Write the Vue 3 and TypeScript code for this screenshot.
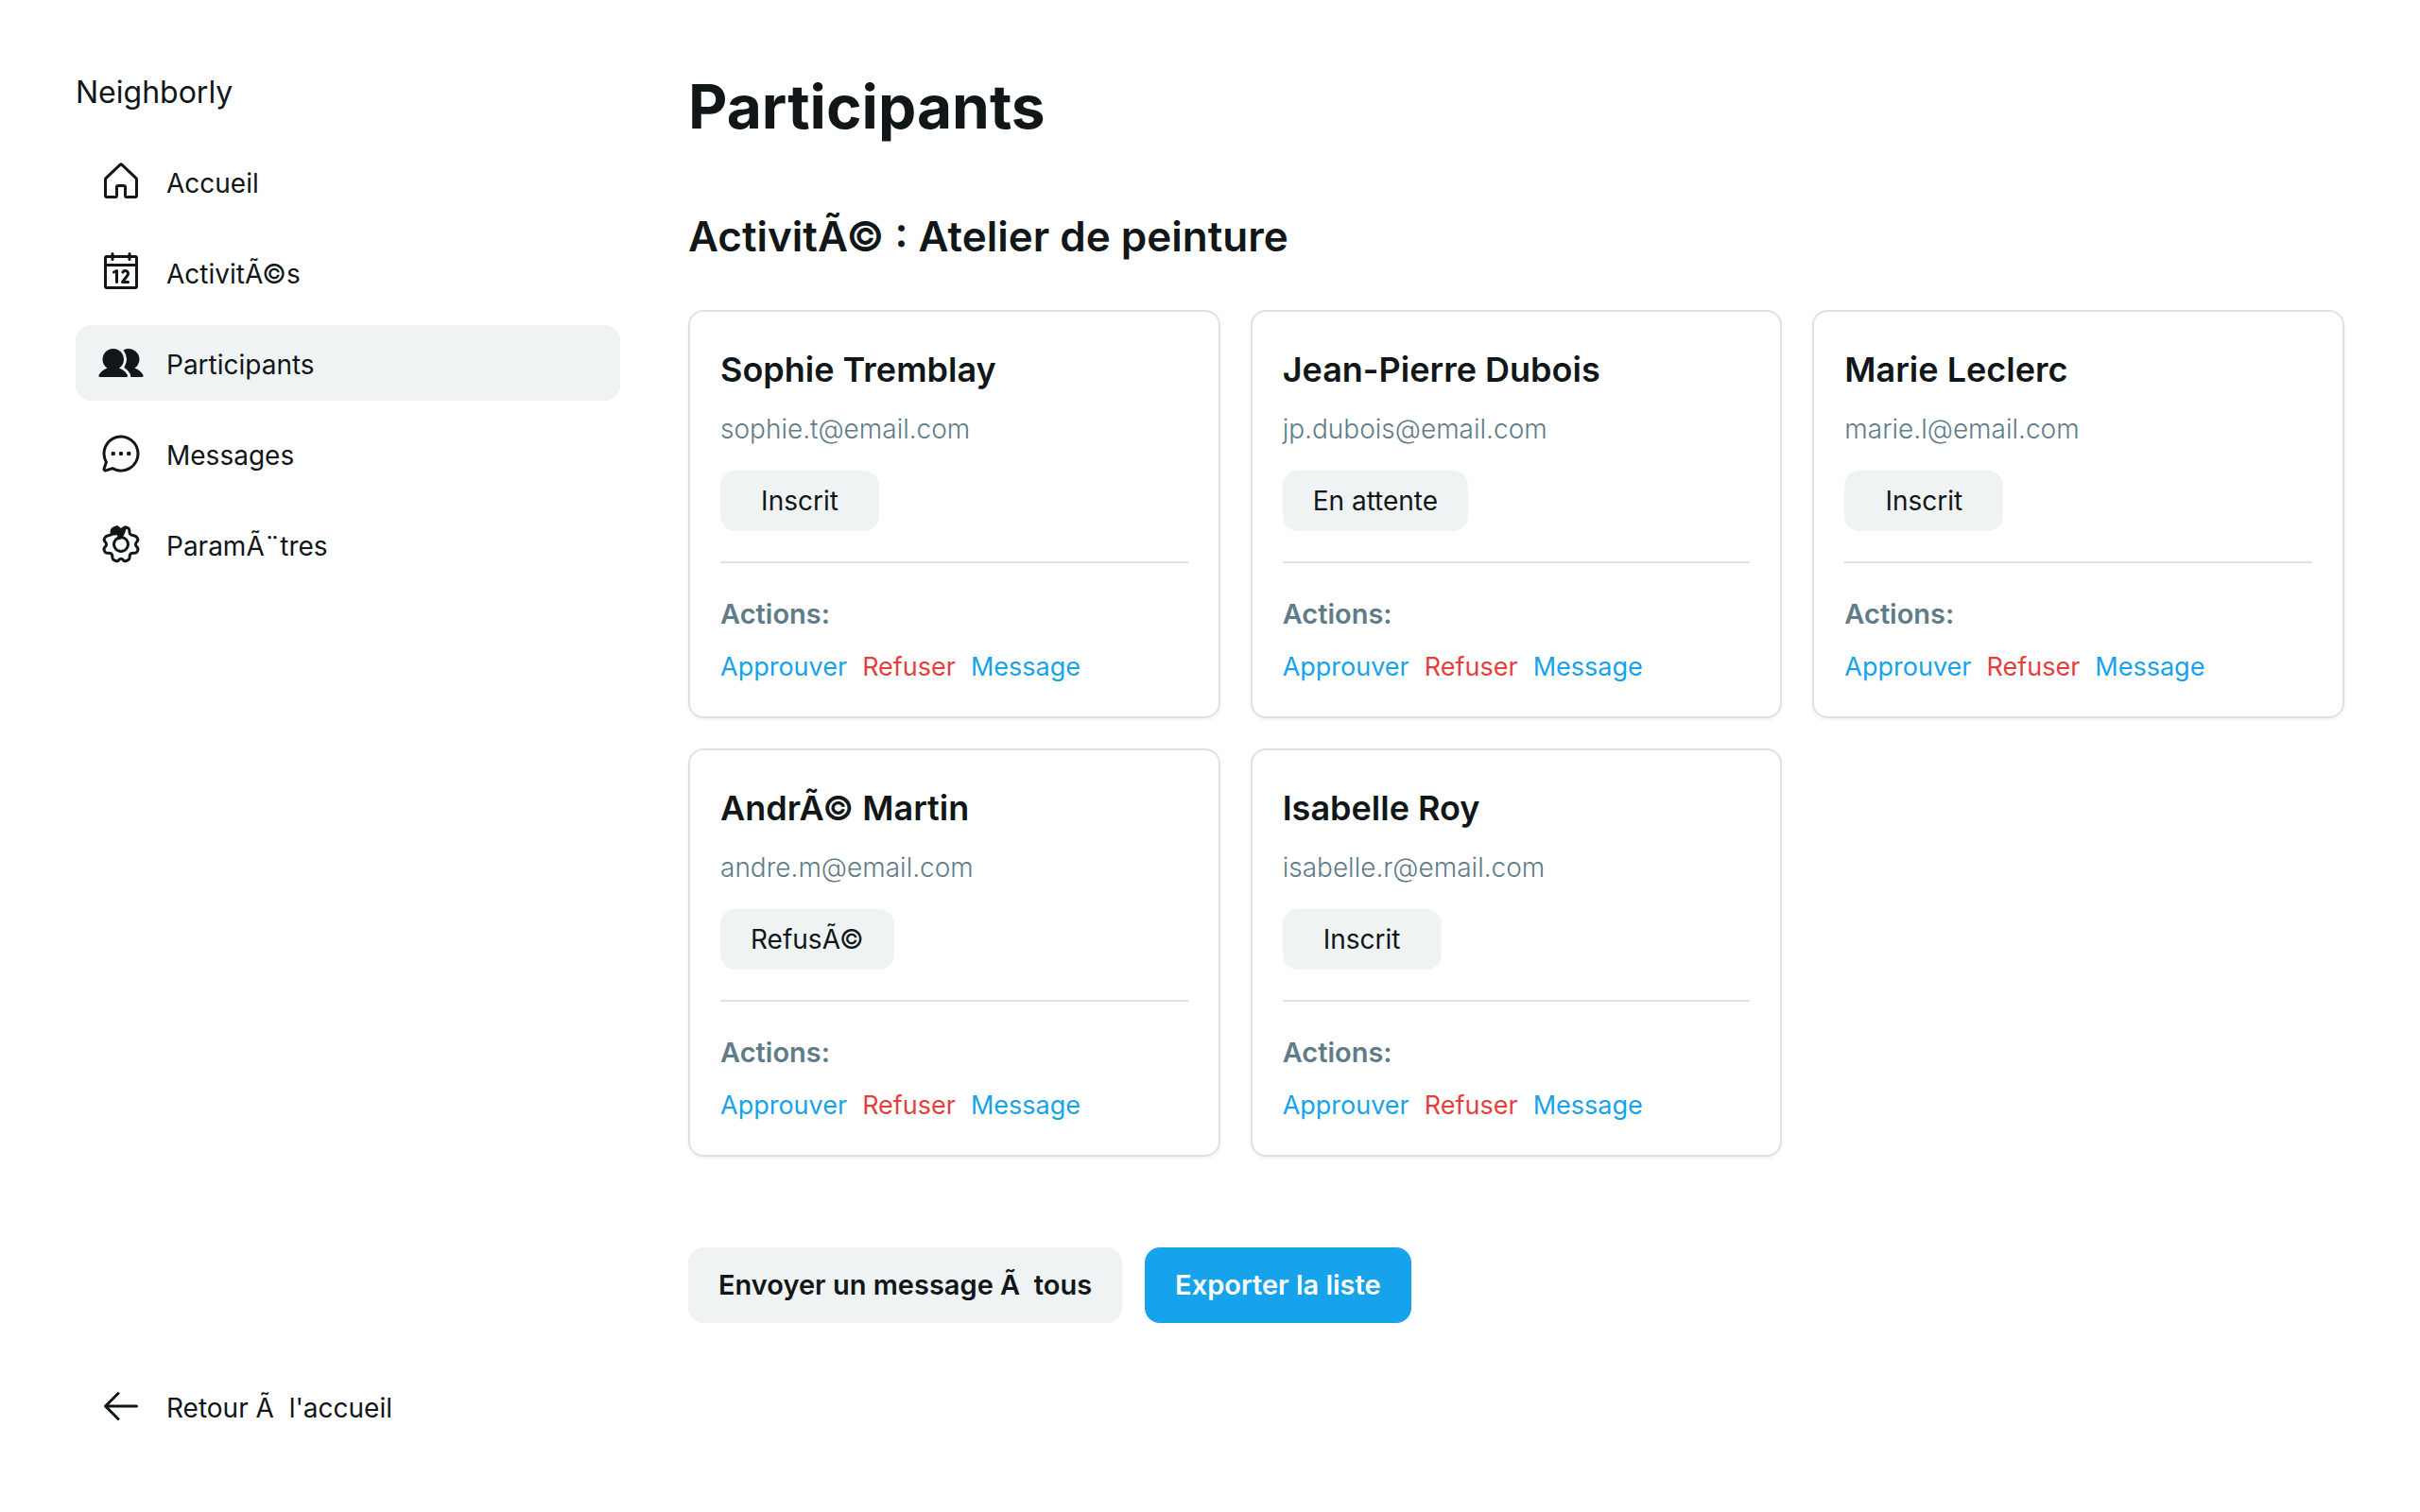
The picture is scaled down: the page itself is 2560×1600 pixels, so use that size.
<script setup lang="ts">
interface NavItem {
  label: string
  icon: string
  active?: boolean
}

interface Participant {
  name: string
  email: string
  status: string
}

const icons: Record<string, string[]> = {
  house: [
    'M218.83,103.77l-80-75.48a1.14,1.14,0,0,1-.11-.11,16,16,0,0,0-21.53,0l-.11.11L37.17,103.77A16,16,0,0,0,32,115.55V208a16,16,0,0,0,16,16H96a16,16,0,0,0,16-16V160h32v48a16,16,0,0,0,16,16h48a16,16,0,0,0,16-16V115.55A16,16,0,0,0,218.83,103.77ZM208,208H160V160a16,16,0,0,0-16-16H112a16,16,0,0,0-16,16v48H48V115.55l.11-.1L128,40l79.9,75.43.11.1Z',
  ],
  calendar: [
    'M208,32H184V24a8,8,0,0,0-16,0v8H88V24a8,8,0,0,0-16,0v8H48A16,16,0,0,0,32,48V208a16,16,0,0,0,16,16H208a16,16,0,0,0,16-16V48A16,16,0,0,0,208,32ZM72,48v8a8,8,0,0,0,16,0V48h80v8a8,8,0,0,0,16,0V48h24V80H48V48ZM208,208H48V96H208V208Zm-96-88v64a8,8,0,0,1-16,0V132.94l-4.42,2.22a8,8,0,0,1-7.16-14.32l16-8A8,8,0,0,1,112,120Zm59.16,30.45L152,176h16a8,8,0,0,1,0,16H136a8,8,0,0,1-6.4-12.8l28.78-38.37A8,8,0,1,0,145.07,132a8,8,0,1,1-13.85-8A24,24,0,0,1,176,136,23.76,23.76,0,0,1,171.16,150.45Z',
  ],
  users: [
    'M164.47,195.63a8,8,0,0,1-6.7,12.37H10.23a8,8,0,0,1-6.7-12.37,95.83,95.83,0,0,1,47.22-37.71,60,60,0,1,1,66.5,0A95.83,95.83,0,0,1,164.47,195.63Zm87.91-.15a95.87,95.87,0,0,0-47.13-37.56A60,60,0,0,0,144.7,54.59a4,4,0,0,0-1.33,6A75.83,75.83,0,0,1,147,150.53a4,4,0,0,0,1.07,5.53,112.32,112.32,0,0,1,29.85,30.83,23.92,23.92,0,0,1,3.65,16.47,4,4,0,0,0,3.95,4.64h60.3a8,8,0,0,0,7.73-5.93A8.22,8.22,0,0,0,252.38,195.48Z',
  ],
  chat: [
    'M140,128a12,12,0,1,1-12-12A12,12,0,0,1,140,128ZM84,116a12,12,0,1,0,12,12A12,12,0,0,0,84,116Zm88,0a12,12,0,1,0,12,12A12,12,0,0,0,172,116Zm60,12A104,104,0,0,1,79.12,219.82L45.07,231.17a16,16,0,0,1-20.24-20.24l11.35-34.05A104,104,0,1,1,232,128Zm-16,0A88,88,0,1,0,51.81,172.06a8,8,0,0,1,.66,6.54L40,216,77.4,203.53a7.85,7.85,0,0,1,2.53-.42,8,8,0,0,1,4,1.08A88,88,0,0,0,216,128Z',
  ],
  gear: [
    'M128,80a48,48,0,1,0,48,48A48.05,48.05,0,0,0,128,80Zm0,80a32,32,0,1,1,32-32A32,32,0,0,1,128,160Z',
    'M104,31C112,28 117,45 128,45C139,45 146,28 154,31L170,38C180,43 172,57 178,69C186,81 204,77 213,84C219,91 227,99 222,108C216,115 210,120 210,128C210,137 217,142 223,150C226,158 221,168 215,175C206,181 193,173 182,181C173,191 180,204 173,213C165,218 158,225 149,223C141,219 137,209 128,209C119,209 115,219 107,223C98,225 91,218 83,213C76,204 83,191 74,181C63,173 50,181 41,175C35,168 30,158 33,150C39,142 46,137 46,128C46,120 40,115 34,108C29,99 37,91 43,84C52,77 70,81 78,69C84,57 76,43 86,38Z',
    'M66,76C70,62 62,44 78,34L104,23C116,24 120,38 130,38C140,38 146,28 156,28L158,40C154,52 150,68 142,80L130,98L108,104C98,100 112,88 108,78C98,72 82,80 66,76Z',
  ],
  arrow: [
    'M224,128a8,8,0,0,1-8,8H59.31l58.35,58.34a8,8,0,0,1-11.32,11.32l-72-72a8,8,0,0,1,0-11.32l72-72a8,8,0,0,1,11.32,11.32L59.31,120H216A8,8,0,0,1,224,128Z',
  ],
}

const navItems: NavItem[] = [
  { label: 'Accueil', icon: 'house' },
  { label: 'ActivitÃ©s', icon: 'calendar' },
  { label: 'Participants', icon: 'users', active: true },
  { label: 'Messages', icon: 'chat' },
  { label: 'ParamÃ¨tres', icon: 'gear' },
]

const participants: Participant[] = [
  { name: 'Sophie Tremblay', email: 'sophie.t@email.com', status: 'Inscrit' },
  { name: 'Jean-Pierre Dubois', email: 'jp.dubois@email.com', status: 'En attente' },
  { name: 'Marie Leclerc', email: 'marie.l@email.com', status: 'Inscrit' },
  { name: 'AndrÃ© Martin', email: 'andre.m@email.com', status: 'RefusÃ©' },
  { name: 'Isabelle Roy', email: 'isabelle.r@email.com', status: 'Inscrit' },
]
</script>

<template>
  <div class="page">
    <aside class="sidebar">
      <p class="brand">Neighborly</p>
      <nav class="nav">
        <a
          v-for="item in navItems"
          :key="item.label"
          href="#"
          class="nav-item"
          :class="{ active: item.active }"
        >
          <svg class="icon" :class="item.icon" viewBox="0 0 256 256" aria-hidden="true">
            <path v-for="d in icons[item.icon]" :key="d" :d="d" />
          </svg>
          <span class="label">{{ item.label }}</span>
        </a>
      </nav>
      <a href="#" class="nav-item back">
        <svg class="icon" viewBox="0 0 256 256" aria-hidden="true">
          <path v-for="d in icons.arrow" :key="d" :d="d" />
        </svg>
        <span class="label">Retour Ã&nbsp; l'accueil</span>
      </a>
    </aside>

    <main class="main">
      <h1 class="title">Participants</h1>
      <h2 class="subtitle">ActivitÃ© : Atelier de peinture</h2>
      <section class="cards">
        <article v-for="person in participants" :key="person.email" class="card">
          <h3 class="name">{{ person.name }}</h3>
          <p class="email">{{ person.email }}</p>
          <button type="button" class="status">{{ person.status }}</button>
          <div class="actions">
            <p class="actions-label">Actions:</p>
            <div class="links">
              <a href="#">Approuver</a>
              <a href="#" class="danger">Refuser</a>
              <a href="#">Message</a>
            </div>
          </div>
        </article>
      </section>
      <div class="footer">
        <button type="button" class="button">Envoyer un message Ã&nbsp; tous</button>
        <button type="button" class="button primary">Exporter la liste</button>
      </div>
    </main>
  </div>
</template>

<style>
body {
  margin: 0;
  background: #ffffff;
}
</style>

<style scoped>
.page {
  box-sizing: border-box;
  display: flex;
  gap: 8px;
  min-height: 100vh;
  padding: 40px 48px;
  background: #ffffff;
  color: #111618;
  font-family: Inter, "Noto Sans", sans-serif;
  font-size: 28px;
  line-height: 40px;
}

h1,
h2,
h3,
p {
  margin: 0;
}

a {
  color: inherit;
  text-decoration: none;
}

button {
  border: 0;
  border-radius: 16px;
  background: #eff3f4;
  color: inherit;
  font: inherit;
  cursor: pointer;
}

.sidebar {
  box-sizing: border-box;
  display: flex;
  flex: 0 0 640px;
  flex-direction: column;
  padding: 32px;
}

.brand {
  margin-bottom: 28px;
  font-size: 32px;
  line-height: 52px;
}

.nav {
  display: flex;
  flex-direction: column;
  gap: 16px;
}

.nav-item {
  display: flex;
  align-items: center;
  gap: 24px;
  height: 80px;
  padding: 0 24px;
  border-radius: 16px;
}

.nav-item.active {
  background: #eff3f4;
}

.label {
  padding-top: 4px;
}

.back {
  margin-top: auto;
}

.icon {
  flex: none;
  width: 48px;
  height: 48px;
  fill: currentColor;
}

.gear path:nth-child(2) {
  fill: none;
  stroke: currentColor;
  stroke-width: 16px;
}

.main {
  box-sizing: border-box;
  flex: 1;
  min-width: 0;
  padding: 32px;
}

.title {
  font-size: 64px;
  font-weight: 700;
  line-height: 82px;
}

.subtitle {
  margin: 70px 0 52px;
  font-size: 44px;
  font-weight: 600;
  line-height: 52px;
}

.cards {
  display: grid;
  grid-template-columns: repeat(3, minmax(0, 1fr));
  gap: 32px;
}

.card {
  padding: 32px;
  border: 2px solid #dbe2e6;
  border-radius: 16px;
  box-shadow: 0 2px 4px rgba(0, 0, 0, 0.05);
}

.name {
  margin-bottom: 14px;
  font-size: 36px;
  font-weight: 600;
  line-height: 58px;
}

.email {
  margin-bottom: 24px;
  color: #617c89;
  font-weight: 300;
}

.status {
  display: block;
  min-width: 168px;
  height: 64px;
  padding: 0 32px;
}

.actions {
  display: flex;
  flex-direction: column;
  gap: 16px;
  margin-top: 32px;
  padding-top: 34px;
  border-top: 2px solid #dbe2e6;
}

.actions-label {
  color: #617c89;
  font-size: 29px;
  font-weight: 600;
}

.links {
  display: flex;
  gap: 16px;
  color: #16a3ec;
  font-size: 27px;
}

.danger {
  color: #e53e3e;
}

.footer {
  display: flex;
  gap: 24px;
  margin-top: 96px;
}

.button {
  height: 80px;
  padding: 0 32px;
  font-size: 29px;
  font-weight: 600;
}

.primary {
  background: #16a3ec;
  color: #ffffff;
}
</style>
